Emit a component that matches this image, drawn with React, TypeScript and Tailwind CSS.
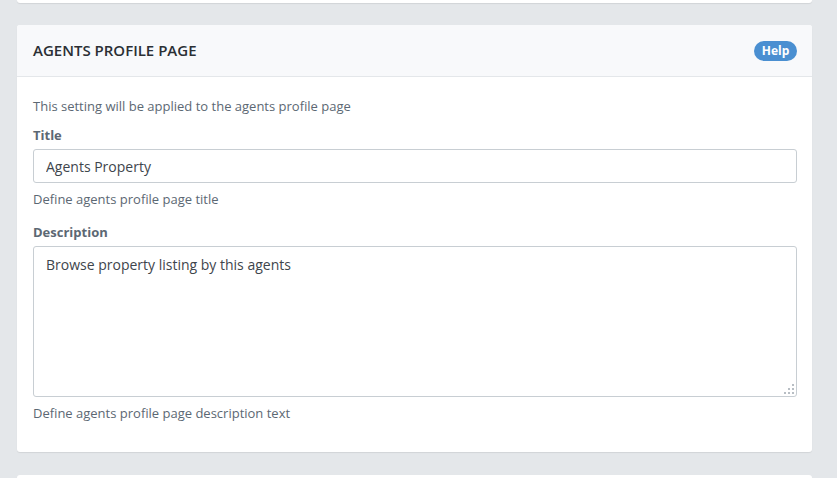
export default function App() {
  return (
    <div
      className="w-[837px] h-[478px] overflow-hidden bg-[#e4e7ea] pl-[17px] pr-[25px] flex flex-col"
      style={{ fontFamily: '"Open Sans", "Noto Sans", sans-serif' }}
    >
      {/* tail of previous card */}
      <div className="h-[3px] bg-white rounded-b-[3px] shadow-[0_1px_1px_rgba(0,0,0,0.08)] shrink-0" />

      <div className="mt-[22px] bg-white rounded-[3px] shadow-[0_1px_1px_rgba(0,0,0,0.08)] shrink-0">
        <div className="h-[52px] bg-[#f8f9fb] border-b border-[#e4e7ea] rounded-t-[3px] flex items-center justify-between pl-4 pr-[15px]">
          <h2 className="text-[15px] font-semibold text-[#2a2f34]">AGENTS PROFILE PAGE</h2>
          <span className="w-[43px] h-[20px] flex items-center justify-center bg-[#4a8fd1] text-white text-[12px] font-bold leading-none rounded-full">
            Help
          </span>
        </div>

        <div className="pl-4 pr-[15px] pt-[19px] pb-[29px] text-[13px] text-[#5c6873]">
          <p className="leading-[20px]">This setting will be applied to the agents profile page</p>

          <label className="block mt-[9px] font-bold leading-[20px]">Title</label>
          <input
            className="mt-[4px] w-full h-[34px] border border-[#c8ced3] rounded-[3px] px-3 text-[14px] text-[#3e454c] outline-none"
            defaultValue="Agents Property"
          />
          <p className="mt-[6px] leading-[20px]">Define agents profile page title</p>

          <label className="block mt-[13px] font-bold leading-[20px]">Description</label>
          <div className="relative mt-[4px]">
            <textarea
              className="block w-full h-[151px] border border-[#c8ced3] rounded-[3px] px-3 py-[7px] text-[14px] text-[#3e454c] outline-none resize-none"
              defaultValue="Browse property listing by this agents"
            />
            <svg className="absolute right-[2px] bottom-[2px]" width="11" height="11" viewBox="0 0 11 11">
              <g fill="#b8bec4">
                <rect x="8" y="0" width="2" height="2" />
                <rect x="4" y="4" width="2" height="2" />
                <rect x="8" y="4" width="2" height="2" />
                <rect x="0" y="8" width="2" height="2" />
                <rect x="4" y="8" width="2" height="2" />
                <rect x="8" y="8" width="2" height="2" />
              </g>
            </svg>
          </div>
          <p className="mt-[6px] leading-[20px]">Define agents profile page description text</p>
        </div>
      </div>

      <div className="mt-[23px] h-[20px] bg-white rounded-t-[3px] shrink-0" />
    </div>
  );
}
